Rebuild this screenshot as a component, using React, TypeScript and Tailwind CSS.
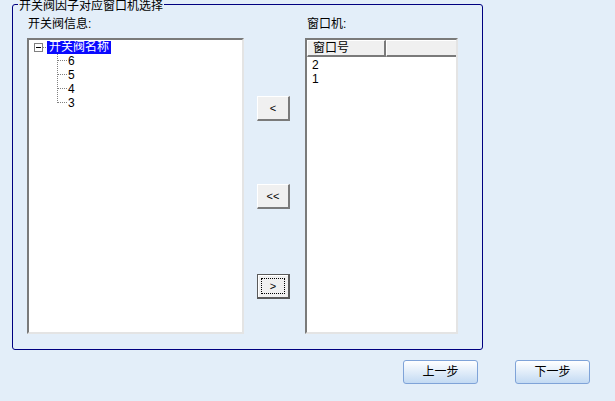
import React from "react";

const FONT = { fontFamily: '"Liberation Sans", "Noto Sans CJK SC", sans-serif' };

function ClassicButton({ label, focused }: { label: string; focused?: boolean }) {
  if (focused) {
    return (
      <button className="w-[33px] h-[25px] bg-[#f0f0f0] border border-[#5a5a5a] border-r-2 border-b-2 flex items-center justify-center p-[3px] shadow-[inset_1px_1px_0_#ffffff]">
        <span className="w-full h-full border border-dotted border-black flex items-center justify-center text-[11px] leading-none text-black">
          {label}
        </span>
      </button>
    );
  }
  return (
    <button className="w-[33px] h-[25px] bg-[#f0f0f0] border-t border-l border-t-white border-l-white border-r-2 border-b-2 border-r-[#7a7a7a] border-b-[#7a7a7a] flex items-center justify-center text-[11px] leading-none text-black">
      {label}
    </button>
  );
}

function NavButton({ label }: { label: string }) {
  return (
    <button className="w-[75px] h-[24px] rounded-[3px] border border-[#7fa3d8] bg-gradient-to-b from-[#ffffff] to-[#c3daf3] text-[12px] leading-none text-black flex items-center justify-center">
      {label}
    </button>
  );
}

function Connector({ last }: { last?: boolean }) {
  return (
    <svg width="10" height="14" className="shrink-0">
      <line x1="0.5" y1="0" x2="0.5" y2={last ? 7 : 14} stroke="#808080" strokeDasharray="1 1" />
      <line x1="1" y1="6.5" x2="10" y2="6.5" stroke="#808080" strokeDasharray="1 1" />
    </svg>
  );
}

export default function App() {
  const children = ["6", "5", "4", "3"];
  return (
    <div className="w-[615px] h-[401px] bg-[#e3eef9] overflow-hidden text-black" style={FONT}>
      <div className="pt-[4px] pl-[12px]">
        <div className="relative w-[471px] h-[346px] border border-[#000080] rounded-[3px]">
          <div className="absolute left-[5px] top-[-5px] px-[1px] bg-[#e3eef9] text-[12px] leading-[12px]">
            开关阀因子对应窗口机选择
          </div>
          <div className="flex pt-[12px] pl-[14px]">
            {/* Left column */}
            <div className="flex flex-col">
              <div className="h-[14px] text-[12px] leading-[14px] pl-[1px]">开关阀信息:</div>
              <div className="mt-[7px] w-[217px] h-[296px] bg-white border-t-2 border-l-2 border-t-[#7a7a7a] border-l-[#7a7a7a] border-r-2 border-b-2 border-r-[#e4e4e4] border-b-[#e4e4e4] text-[12px]">
                <div className="flex items-center h-[14px] pl-[5px]">
                  <div className="w-[9px] h-[9px] border border-[#808080] bg-white flex items-center justify-center">
                    <div className="w-[5px] h-[1px] bg-black" />
                  </div>
                  <svg width="4" height="14" className="shrink-0">
                    <line x1="0" y1="7.5" x2="4" y2="7.5" stroke="#808080" strokeDasharray="1 1" />
                  </svg>
                  <div className="bg-[#0a0aff] text-white h-[13px] leading-[13px] px-[2px]">开关阀名称</div>
                </div>
                {children.map((c, i) => (
                  <div key={c} className="flex items-center h-[14px] pl-[28px]">
                    <Connector last={i === children.length - 1} />
                    <span className="ml-[1px] leading-[14px]">{c}</span>
                  </div>
                ))}
              </div>
            </div>
            {/* Middle column */}
            <div className="flex flex-col ml-[13px] pt-[79px]">
              <ClassicButton label="<" />
              <div className="mt-[63px]">
                <ClassicButton label="<<" />
              </div>
              <div className="mt-[65px]">
                <ClassicButton label=">" focused />
              </div>
            </div>
            {/* Right column */}
            <div className="flex flex-col ml-[15px]">
              <div className="h-[14px] text-[12px] leading-[14px] pl-[2px]">窗口机:</div>
              <div className="mt-[7px] w-[153px] h-[296px] bg-white border-t-2 border-l-2 border-t-[#7a7a7a] border-l-[#7a7a7a] border-r-2 border-b-2 border-r-[#e4e4e4] border-b-[#e4e4e4] text-[12px]">
                <div className="flex h-[17px] bg-[#f0f0f0]">
                  <div className="w-[79px] h-full border-t border-l border-t-white border-l-white border-r-2 border-b-2 border-r-[#7a7a7a] border-b-[#7a7a7a] pl-[5px] leading-[14px]">
                    窗口号
                  </div>
                  <div className="flex-1 h-full border-t border-l border-t-white border-l-white border-b-2 border-b-[#7a7a7a]" />
                </div>
                <div className="pt-[1px] pl-[5px]">
                  <div className="h-[14px] leading-[14px]">2</div>
                  <div className="h-[14px] leading-[14px]">1</div>
                </div>
              </div>
            </div>
          </div>
        </div>
      </div>
      <div className="flex justify-end gap-[37px] pr-[25px] mt-[10px]">
        <NavButton label="上一步" />
        <NavButton label="下一步" />
      </div>
    </div>
  );
}
